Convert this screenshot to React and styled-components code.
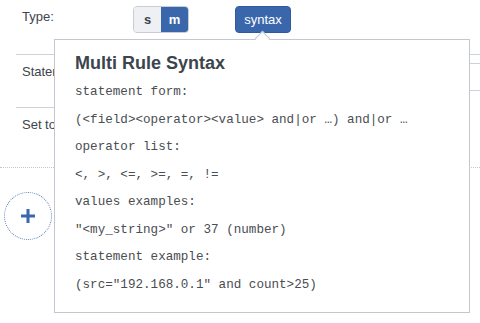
import React from "react";
import styled, { createGlobalStyle } from "styled-components";

const GlobalStyle = createGlobalStyle`
  html, body {
    margin: 0;
    padding: 0;
    background: #fff;
    overflow: hidden;
    font-family: "Liberation Sans", Arial, sans-serif;
    color: #3c444d;
  }
`;

const BLUE = "#3a67ab";

const lines = [
  "statement form:",
  "(<field><operator><value> and|or …) and|or …",
  "operator list:",
  "<, >, <=, >=, =, !=",
  "values examples:",
  '"<my_string>" or 37 (number)',
  "statement example:",
  '(src="192.168.0.1" and count>25)',
];

function App() {
  return (
    <Page>
      <GlobalStyle />
      <Form>
        <Row>
          <Label>Type:</Label>
          <Segmented>
            <Segment>s</Segment>
            <Segment $active>m</Segment>
          </Segmented>
          <SyntaxButton>syntax</SyntaxButton>
        </Row>
        <Row $divider>
          <Label>Statement:</Label>
          <Field>
            <Input />
          </Field>
        </Row>
        <Row $divider $short $tall>
          <Label>Set to:</Label>
        </Row>
      </Form>
      <Dotted />
      <AddButton>
        <svg width="16" height="16" viewBox="0 0 16 16">
          <path d="M8 1v14M1 8h14" stroke={BLUE} strokeWidth="3" />
        </svg>
      </AddButton>

      <Popover>
        <Arrow />
        <Title>Multi Rule Syntax</Title>
        <Code>
          {lines.map((l) => (
            <CodeLine key={l}>{l}</CodeLine>
          ))}
        </Code>
      </Popover>
    </Page>
  );
}

const Page = styled.div`
  position: relative;
  width: 480px;
  height: 323px;
  overflow: hidden;
`;

const Form = styled.div`
  margin-left: 16px;
`;

const Row = styled.div`
  position: relative;
  display: flex;
  align-items: flex-start;
  height: ${(p) => (p.$tall ? "60px" : p.$divider ? "53px" : "54px")};
  box-sizing: border-box;
  ${(p) => p.$divider && `border-top: 1px solid ${p.$short ? "transparent" : "#cfd2d8"};`}
  ${(p) =>
    p.$short &&
    `&::before {
      content: "";
      position: absolute;
      left: 0;
      top: -1px;
      width: 420px;
      border-top: 1px solid #cfd2d8;
    }`}
`;

const Label = styled.div`
  width: 111px;
  padding-left: 6px;
  padding-top: 9px;
  font-size: 13px;
  line-height: 16px;
  color: #3c444d;
  white-space: nowrap;
`;

const Segmented = styled.div`
  display: flex;
  margin-top: 6px;
  height: 27px;
  border: 1px solid #c9cdd3;
  border-radius: 4px;
  overflow: hidden;
  box-sizing: border-box;
`;

const Segment = styled.div`
  width: 27px;
  display: flex;
  align-items: center;
  justify-content: center;
  font-size: 13px;
  font-weight: bold;
  background: ${(p) => (p.$active ? BLUE : "#eef0f3")};
  color: ${(p) => (p.$active ? "#fff" : "#3c444d")};
`;

const SyntaxButton = styled.div`
  margin-left: 46px;
  margin-top: 6px;
  width: 56px;
  height: 27px;
  box-sizing: border-box;
  border: 1px solid #2f5aa0;
  border-radius: 4px;
  background: ${BLUE};
  color: #fff;
  font-size: 13px;
  display: flex;
  align-items: center;
  justify-content: center;
`;

const Field = styled.div`
  flex: 1;
  padding-top: 8px;
`;

const Input = styled.div`
  height: 28px;
  width: 420px;
  box-sizing: border-box;
  border: 1px solid #cfd2d8;
  border-right: none;
`;

const Dotted = styled.div`
  border-top: 1px dotted #c3c7ce;
`;

const AddButton = styled.div`
  margin: 24px 0 0 4px;
  width: 48px;
  height: 48px;
  box-sizing: border-box;
  border-radius: 50%;
  border: 1px dotted #5a7fb8;
  display: flex;
  align-items: center;
  justify-content: center;
`;

const Popover = styled.div`
  position: absolute;
  left: 54px;
  top: 39px;
  width: 416px;
  height: 274px;
  box-sizing: border-box;
  padding: 12px 20px;
  background: #fff;
  border: 1px solid #c3c7cf;
  z-index: 10;
`;

const Arrow = styled.div`
  position: absolute;
  top: -7px;
  left: 202px;
  width: 10px;
  height: 10px;
  background: #fff;
  border-left: 1px solid #c3c7cf;
  border-top: 1px solid #c3c7cf;
  transform: rotate(45deg);
`;

const Title = styled.div`
  font-size: 18px;
  line-height: 22px;
  font-weight: bold;
  color: #3c444d;
`;

const Code = styled.div`
  margin-top: 5px;
`;

const CodeLine = styled.div`
  font-family: "Liberation Mono", "Courier New", monospace;
  font-size: 12.6px;
  line-height: 27.5px;
  color: #4a4d52;
  white-space: pre;
`;

export default App;
